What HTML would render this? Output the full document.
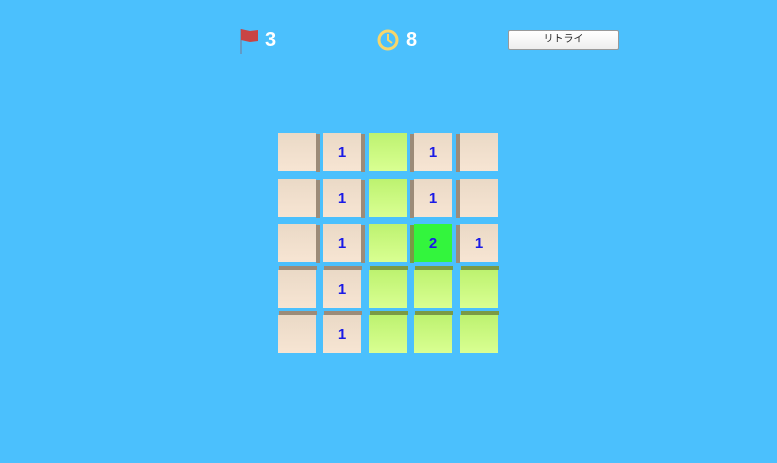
<!DOCTYPE html><html><head><style>
body{margin:0;width:777px;height:463px;background:#4bc0fd;position:relative;overflow:hidden;font-family:"Liberation Sans",sans-serif}
.t{position:absolute;width:38px;height:38px;display:flex;align-items:center;justify-content:center;color:#1a1ae6;font-weight:bold;font-size:15px}
.s{position:absolute;background:#9c8b78}
.g{position:absolute;background:#7a9a45}
.hud{position:absolute;color:#fff;font-weight:bold;font-size:20px}
</style></head><body>
<svg style="position:absolute;left:238px;top:27px" width="22" height="28"><line x1="3" y1="2" x2="3" y2="27" stroke="#6a8fb3" stroke-width="1.5"/><path d="M3 2 L12 4 L20 3 L20 14 L12 15 L3 13Z" fill="#c94444"/></svg>
<div class="hud" style="left:265px;top:29px">3</div>
<svg style="position:absolute;left:376px;top:28px" width="24" height="24"><circle cx="12" cy="12" r="9" fill="none" stroke="#f8d66a" stroke-width="3"/><path d="M12 6 V12 L16 15" fill="none" stroke="#f8d66a" stroke-width="2"/></svg>
<div class="hud" style="left:406px;top:29px">8</div>
<div style="position:absolute;left:508px;top:30px;width:109px;height:18px;background:linear-gradient(#fff,#eee);border:1px solid #999;border-radius:2px;font:10px 'Liberation Sans','Noto Sans CJK JP',sans-serif;text-align:center;line-height:18px;color:#222">リトライ</div>
<div id="g"></div>
<script>
var xs=[278,323,369,414,460],ys=[133,179,224,270,315];
var m=[["b","b1","g","b1","b"],["b","b1","g","b1","b"],["b","b1","g","G2","b1"],["b","b1","g","g","g"],["b","b1","g","g","g"]];
var h="";
for(var r=0;r<5;r++)for(var c=0;c<5;c++){var v=m[r][c],x=xs[c],y=ys[r];
var bg=v[0]=="b"?"linear-gradient(#ead9c6,#f7e5d3)":v[0]=="G"?"#33f53d":"linear-gradient(#bdf270,#d9ff92)";
var sc=v[0]=="b"?"s":"g";
if(r<3){ if(c<2) h+='<div class="'+sc+'" style="left:'+(x+38)+'px;top:'+(y+1)+'px;width:4px;height:38px"></div>';
 else if(c>2) h+='<div class="'+sc+'" style="left:'+(x-4)+'px;top:'+(y+1)+'px;width:4px;height:38px"></div>';}
else h+='<div class="'+sc+'" style="left:'+(x+1)+'px;top:'+(y-4)+'px;width:38px;height:4px"></div>';
h+='<div class="t" style="left:'+x+'px;top:'+y+'px;background:'+bg+'">'+(v.length>1?v[1]:"")+'</div>';}
document.getElementById("g").innerHTML=h;
</script>
</body></html>
